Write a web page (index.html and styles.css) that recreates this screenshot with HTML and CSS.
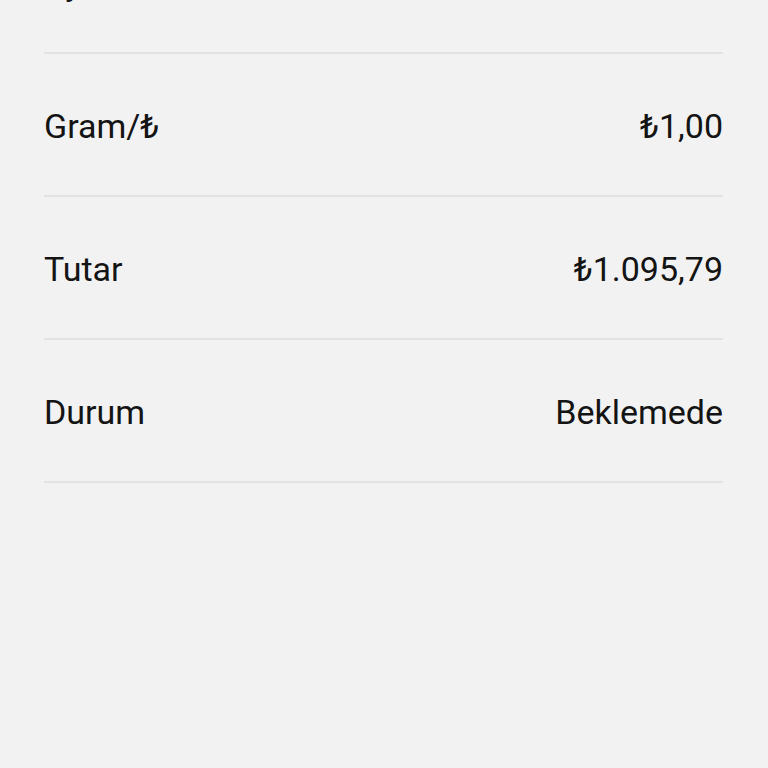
FILE: index.html
```html
<!DOCTYPE html>
<html lang="tr">
<head>
<meta charset="utf-8">
<link rel="stylesheet" href="styles.css">
</head>
<body>
<div class="list">
  <div class="row"><span class="label">Ayar</span><span class="value"></span></div>
  <div class="row"><span class="label">Gram/₺</span><span class="value">₺1,00</span></div>
  <div class="row"><span class="label">Tutar</span><span class="value">₺1.095,79</span></div>
  <div class="row"><span class="label">Durum</span><span class="value">Beklemede</span></div>
</div>
</body>
</html>
```
FILE: styles.css
```css
html, body {
  margin: 0;
  padding: 0;
  background: #f2f2f2;
  height: 100%;
  overflow: hidden;
}
body {
  font-family: Roboto, "Noto Sans", "DejaVu Sans", sans-serif;
  color: #141414;
}
.list {
  margin: -89px 45px 0 44px;
  display: flex;
  flex-direction: column;
}
.row {
  height: 141px;
  display: flex;
  align-items: center;
  justify-content: space-between;
  border-bottom: 2px solid #e3e3e3;
  font-size: 34px;
}
.label, .value {
  line-height: 1;
  padding-top: 2px;
}
```
